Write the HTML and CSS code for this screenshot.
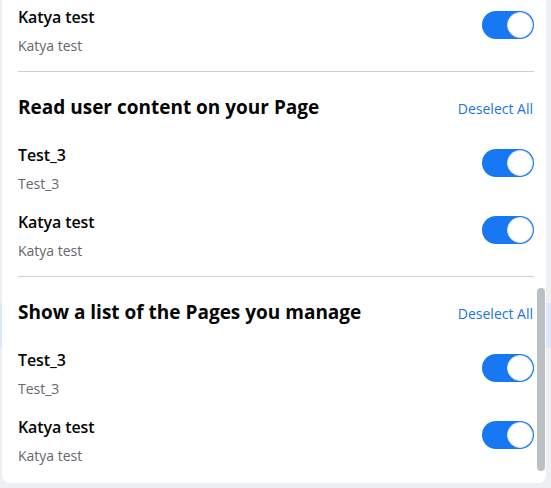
FILE: index.html
```html
<!DOCTYPE html>
<html lang="en">
<head>
<meta charset="utf-8">
<title>Permissions</title>
<link rel="stylesheet" href="styles.css">
</head>
<body>
<div class="panel">
  <div class="content">
    <div class="item">
      <div class="item-text">
        <div class="item-title">Katya test</div>
        <div class="item-sub">Katya test</div>
      </div>
      <span class="toggle"><span class="knob"></span></span>
    </div>

    <div class="divider"></div>

    <div class="section">
      <div class="section-head">
        <h2 class="section-title">Read user content on your Page</h2>
        <a class="deselect">Deselect All</a>
      </div>
      <div class="item">
        <div class="item-text">
          <div class="item-title">Test_3</div>
          <div class="item-sub">Test_3</div>
        </div>
        <span class="toggle"><span class="knob"></span></span>
      </div>
      <div class="item">
        <div class="item-text">
          <div class="item-title">Katya test</div>
          <div class="item-sub">Katya test</div>
        </div>
        <span class="toggle"><span class="knob"></span></span>
      </div>
    </div>

    <div class="divider"></div>

    <div class="section">
      <div class="section-head">
        <h2 class="section-title">Show a list of the Pages you manage</h2>
        <a class="deselect">Deselect All</a>
      </div>
      <div class="item">
        <div class="item-text">
          <div class="item-title">Test_3</div>
          <div class="item-sub">Test_3</div>
        </div>
        <span class="toggle"><span class="knob"></span></span>
      </div>
      <div class="item">
        <div class="item-text">
          <div class="item-title">Katya test</div>
          <div class="item-sub">Katya test</div>
        </div>
        <span class="toggle"><span class="knob"></span></span>
      </div>
    </div>
  </div>
  <div class="scrollbar"></div>
</div>
</body>
</html>
```

FILE: styles.css
```css
html, body {
  margin: 0;
  padding: 0;
}

body {
  width: 551px;
  height: 488px;
  overflow: hidden;
  font-family: "Open Sans", "Noto Sans", sans-serif;
  color: #050505;
  background:
    linear-gradient(to bottom, transparent 303px, #dbe7fa 303px, #dbe7fa 348px, transparent 348px),
    #eeeff1;
}

.panel {
  position: relative;
  margin-left: 2px;
  width: 544px;
  height: 483px;
  background: #ffffff;
  border-radius: 0 0 8px 8px;
  overflow: hidden;
}

.content {
  padding: 7px 12px 0 16px;
}

.item {
  display: flex;
  justify-content: space-between;
  align-items: flex-start;
}

.section .item + .item {
  margin-top: 19px;
}

.item-text {
  display: flex;
  flex-direction: column;
  gap: 10px;
}

.item-title {
  font-size: 16px;
  font-weight: 600;
  line-height: 20px;
  letter-spacing: -0.1px;
}

.item-sub {
  font-size: 14px;
  line-height: 18px;
  color: #65676b;
}

.toggle {
  position: relative;
  margin-top: 4px;
  width: 52px;
  height: 28px;
  border-radius: 14px;
  background: #1877f2;
  flex: none;
}

.knob {
  position: absolute;
  top: 1px;
  right: 1px;
  width: 26px;
  height: 26px;
  border-radius: 50%;
  background: #ffffff;
  box-sizing: border-box;
  border: 1px solid #d8e6fc;
}

.divider {
  height: 1px;
  background: #ced0d4;
  margin-top: 16px;
}

.section {
  padding-top: 23px;
}

.section-head {
  display: flex;
  justify-content: space-between;
  align-items: baseline;
  margin-bottom: 26px;
}

.section-title {
  margin: 0;
  font-size: 19px;
  font-weight: 700;
  line-height: 24px;
}

.deselect {
  font-size: 14px;
  line-height: 18px;
  color: #1b74e4;
  cursor: pointer;
  margin-right: 1px;
}

.scrollbar {
  position: absolute;
  left: 535px;
  top: 288px;
  width: 8px;
  height: 183px;
  border-radius: 4px;
  background: #bcc0c4;
}
```
